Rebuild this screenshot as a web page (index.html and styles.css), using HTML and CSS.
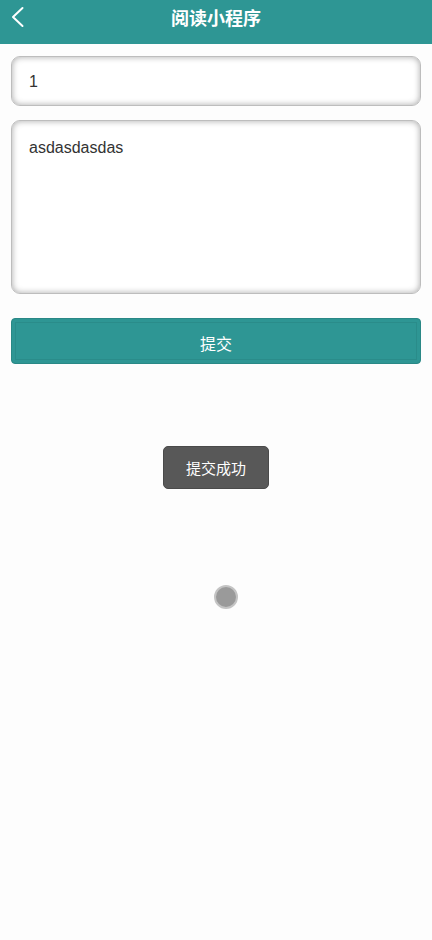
FILE: index.html
```html
<!DOCTYPE html>
<html lang="zh">
<head>
<meta charset="utf-8">
<title>阅读小程序</title>
<link rel="stylesheet" href="styles.css">
</head>
<body>
<header class="topbar">
  <span class="back">
    <svg width="16" height="22" viewBox="0 0 16 22"><path d="M12.5 2 L3 11 L12.5 20" fill="none" stroke="#fff" stroke-width="2" stroke-linecap="round" stroke-linejoin="round"/></svg>
  </span>
  <h1 class="title">阅读小程序</h1>
</header>
<main class="form">
  <div class="field field-input">1</div>
  <div class="field field-area">asdasdasdas</div>
  <button class="submit">提交</button>
</main>
<div class="toast">提交成功</div>
<div class="dot"></div>
</body>
</html>
```

FILE: styles.css
```css
html, body {
  margin: 0;
  padding: 0;
  background: #fdfdfd;
  font-family: "Liberation Sans", Arial, "Noto Sans CJK SC", sans-serif;
}
body {
  position: relative;
  width: 432px;
  height: 940px;
  overflow: hidden;
}
.topbar {
  position: relative;
  height: 44px;
  background: #2e9694;
  display: flex;
  align-items: center;
  justify-content: center;
}
.back {
  position: absolute;
  left: 10px;
  top: 6px;
  display: flex;
}
.title {
  margin: 0;
  color: #fff;
  font-size: 18px;
  font-weight: bold;
  font-family: "Noto Sans CJK SC", sans-serif;
  line-height: 1;
  margin-top: -10px;
}
.form {
  padding: 12px 11px;
  display: flex;
  flex-direction: column;
}
.field {
  border: 1px solid #bdbdbd;
  border-radius: 9px;
  background: #fff;
  box-shadow: inset 0 0 6px rgba(0,0,0,0.35);
  color: #333;
  font-size: 16px;
  padding: 0 17px;
}
.field-input {
  height: 48px;
  line-height: 50px;
}
.field-area {
  margin-top: 14px;
  height: 174px;
  padding-top: 15px;
  box-sizing: border-box;
  line-height: 24px;
}
.submit {
  margin-top: 24px;
  height: 46px;
  border: 1px solid #2a8886;
  border-radius: 4px;
  background: #2e9694;
  box-shadow: inset 0 0 0 3px #2e9694, inset 0 0 0 4px #2a8c8a;
  color: #fff;
  font-size: 16px;
  font-family: "Noto Sans CJK SC", sans-serif;
  padding: 0;
  padding-top: 4px;
}
.toast {
  position: absolute;
  left: 163px;
  top: 446px;
  width: 106px;
  height: 43px;
  box-sizing: border-box;
  background: #585858;
  border: 1px solid #4a4a4a;
  border-radius: 5px;
  color: #fff;
  font-size: 15px;
  font-family: "Noto Sans CJK SC", sans-serif;
  display: flex;
  align-items: center;
  justify-content: center;
}
.dot {
  position: absolute;
  left: 214px;
  top: 585px;
  width: 24px;
  height: 24px;
  border-radius: 50%;
  background: #9a9a9a;
  border: 2px solid #c4c4c4;
  box-sizing: border-box;
}
```
